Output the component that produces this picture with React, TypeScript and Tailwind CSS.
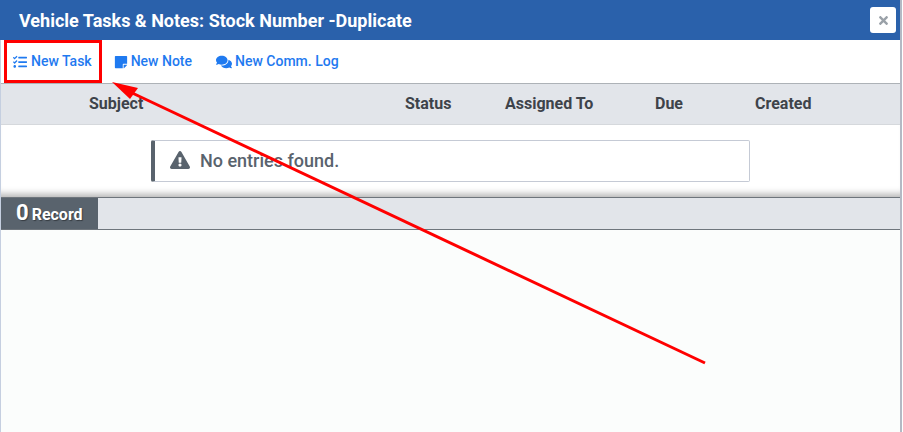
import { FaComments, FaExclamationTriangle, FaStickyNote, FaTasks, FaTimes } from "react-icons/fa";

export default function App() {
  return (
    <div className="relative w-[903px] h-[432px] overflow-hidden bg-white font-['Roboto',sans-serif]">
      <div className="h-full w-[902px] border-l border-r-2 border-l-[#c5cfe0] border-r-[#b4b9c4] flex flex-col">
        {/* Title bar */}
        <div className="h-10 -ml-px bg-[#2a61ab] flex items-center justify-between pl-[19px] pr-[4px]">
          <h1 className="text-white font-bold text-[18px]">Vehicle Tasks &amp; Notes: Stock Number -Duplicate</h1>
          <button className="w-[26px] h-[26px] bg-white rounded-[3px] flex items-center justify-center text-[#9aa1a8] text-[13px]">
            <FaTimes />
          </button>
        </div>

        {/* Toolbar */}
        <div className="h-[44px] flex items-center pl-[12px] text-[14px] font-medium text-[#1f7af0] border-b border-[#adb2b7]">
          <a className="flex items-center gap-[4px] mr-[22px]"><FaTasks className="text-[14px]" />New Task</a>
          <a className="flex items-center gap-[3px] mr-[24px]"><FaStickyNote className="text-[14px]" />New Note</a>
          <a className="flex items-center gap-[3px]"><FaComments className="text-[16px]" />New Comm. Log</a>
        </div>

        {/* Table header */}
        <div className="h-[41px] bg-[#e2e5ea] border-b border-[#d5d8dc] flex items-center text-[16px] font-bold text-[#3e434a]">
          <span className="ml-[88px] w-[316px]">Subject</span>
          <span className="w-[100px]">Status</span>
          <span className="w-[150px]">Assigned To</span>
          <span className="w-[100px]">Due</span>
          <span>Created</span>
        </div>

        {/* Empty alert */}
        <div className="h-[72px] pt-[15px] pl-[150px] shadow-[inset_0_-9px_7px_-6px_rgba(0,0,0,0.3)]">
          <div className="w-[599px] h-[42px] pb-[2px] border border-l-[4px] border-[#c5cad5] border-l-[#59636d] rounded-[2px] flex items-center pl-[15px] gap-[10px] text-[#59636d] text-[18px] font-medium">
            <FaExclamationTriangle className="text-[20px]" />
            No entries found.
          </div>
        </div>

        {/* Records bar */}
        <div className="h-[33px] bg-[#e2e5ea] border-y border-[#6e757c] flex">
          <div className="w-[97px] bg-[#59636d] text-white font-bold flex items-baseline pl-[15px] gap-[3px] text-[16px] [text-shadow:1px_1px_1px_rgba(0,0,0,0.4)]">
            <span className="text-[22px] leading-[29px]">0</span>
            Record
          </div>
        </div>

        <div className="flex-1 bg-[#fbfdfc]" />
      </div>

      {/* Annotation */}
      <div className="absolute left-[4px] top-[40px] w-[98px] h-[43px] border-[3px] border-[#ff0000]" />
      <svg className="absolute inset-0" width="903" height="432" viewBox="0 0 903 432">
        <line x1="705" y1="363" x2="128" y2="91" stroke="#ff0000" strokeWidth="3" />
        <polygon points="112,82 138,88 130,99" fill="#ff0000" />
      </svg>
    </div>
  );
}
